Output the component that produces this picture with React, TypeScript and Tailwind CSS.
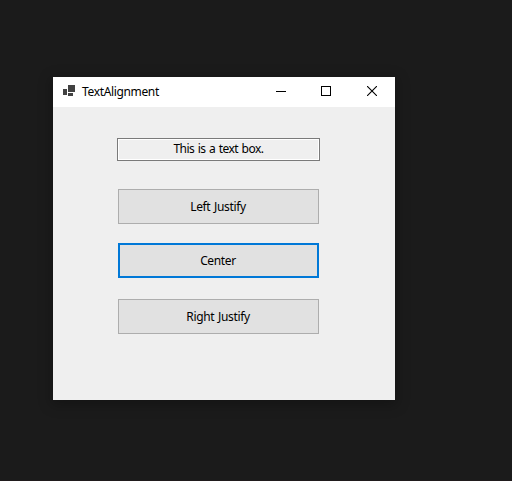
import { useState } from 'react';

const alignments = [
  { id: 'left', label: 'Left Justify', spacing: 'mt-7' },
  { id: 'center', label: 'Center', spacing: 'mt-[19px]' },
  { id: 'right', label: 'Right Justify', spacing: 'mt-[21px]' },
];

function TitleBar() {
  return (
    <header className="flex h-[30px] bg-white">
      <svg width="12" height="12" className="mt-2 ml-[10px] shrink-0" fill="#424242" shapeRendering="crispEdges">
        <rect x="0" y="4" width="4" height="6" />
        <rect x="5" y="0" width="7" height="7" />
        <rect x="5" y="8" width="5" height="3" />
      </svg>
      <h1 className="mt-1.5 ml-[7px] flex-1 text-[12px] leading-[18px] tracking-[-0.35px]">TextAlignment</h1>
      <button aria-label="Minimize" className="flex w-[45px] justify-center pt-[9px]">
        <svg width="10" height="10" shapeRendering="crispEdges"><path d="M0 5.5h10" stroke="black" /></svg>
      </button>
      <button aria-label="Maximize" className="flex w-[45px] justify-center pt-[9px]">
        <svg width="10" height="10" shapeRendering="crispEdges"><path d="M.5.5h9v9h-9z" fill="none" stroke="black" /></svg>
      </button>
      <button aria-label="Close" className="flex w-[47px] justify-center pt-[9px]">
        <svg width="10" height="10"><path d="M0 0l10 10M10 0L0 10" stroke="black" strokeWidth="1.1" /></svg>
      </button>
    </header>
  );
}

export default function App() {
  const [selected, setSelected] = useState('center');
  return (
    <main className="h-[481px] w-[512px] overflow-hidden border-b border-[#201b1d] bg-[#1b1b1b] pt-[77px] pl-[53px] font-['Noto_Sans','Open_Sans',sans-serif] text-black">
      <section className="h-[323px] w-[342px] bg-[#efefef] shadow-[0_3px_12px_2px_rgba(0,0,0,0.25)]">
        <TitleBar />
        <div className="flex flex-col pt-[31px]">
          <div className="ml-16 flex h-[23px] w-[203px] justify-center border border-[#7a7a7a] bg-[#efefef] pt-px text-[12px] leading-[18px] tracking-[-0.5px] [word-spacing:0.8px] shadow-[inset_0_0_0_1px_white]">
            This is a text box.
          </div>
          {alignments.map(({ id, label, spacing }) => (
            <button
              key={id}
              onClick={() => setSelected(id)}
              className={`${spacing} ml-[65px] flex h-[35px] w-[201px] items-center justify-center bg-[#e1e1e1] pr-px text-[12px] leading-[18px] tracking-[-0.35px] [word-spacing:1px] ${selected === id ? 'border-2 border-[#0078d7]' : 'border border-[#adadad]'}`}
            >
              {label}
            </button>
          ))}
        </div>
      </section>
    </main>
  );
}
